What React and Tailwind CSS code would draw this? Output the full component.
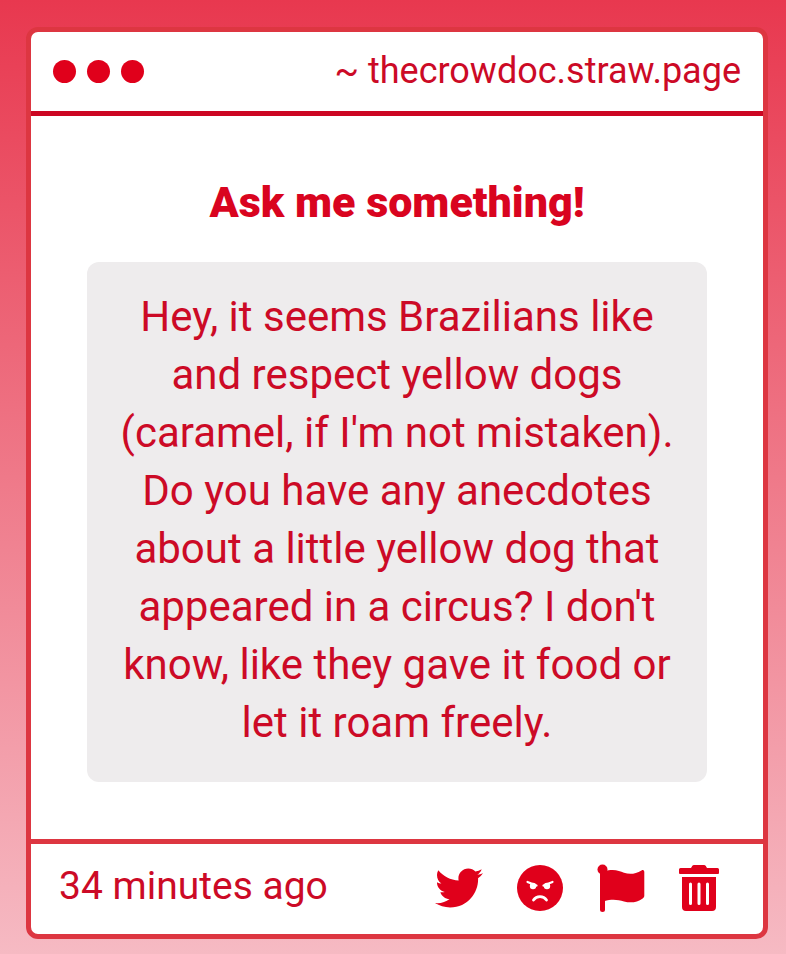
import { FaTwitter } from "react-icons/fa";

function AngryIcon() {
  return (
    <svg width="46" height="46" viewBox="0 0 46 46" aria-hidden="true">
      <circle cx="23" cy="23" r="23" fill="currentColor" />
      <g fill="white">
        <circle cx="16" cy="21" r="3.200" />
        <circle cx="30" cy="21" r="3.200" />
      </g>
      <g fill="none" stroke="white" strokeLinecap="round">
        <path d="M10.500 17l9 3.500M35.500 17l-9 3.500" strokeWidth="2.200" />
        <path d="M16.500 35c3-4.500 10-4.500 13 0" strokeWidth="2.800" />
      </g>
    </svg>
  );
}

function FlagIcon() {
  return (
    <svg width="48" height="48" viewBox="0 0 48 48" fill="currentColor" aria-hidden="true">
      <circle cx="5.500" cy="5.500" r="5" />
      <path d="M3 5.500h5v40a2.500 2.500 0 0 1-5 0z" />
      <path d="M7 7.500C17 4.500 22 7 27 8.800c6 2 11.500 1.200 17.500-2.400 1.500-.9 2.800-.2 2.800 1.600v23.500c0 1.300-.5 2.200-1.600 2.900-5.400 3.600-11.200 5-18.700 3-6.500-1.900-12-2.700-20-.2z" />
    </svg>
  );
}

function TrashIcon() {
  return (
    <svg width="40" height="46" viewBox="0 0 40 46" fill="currentColor" aria-hidden="true">
      <path d="M1.500 3H12l1.200-2c.4-.7 1-1 1.800-1h10c.8 0 1.400.3 1.800 1L28 3h10.500A1.500 1.500 0 0 1 40 4.500V8a1 1 0 0 1-1 1H1a1 1 0 0 1-1-1V4.500A1.500 1.500 0 0 1 1.500 3z" />
      <path
        fillRule="evenodd"
        d="M3 12h34v30a4 4 0 0 1-4 4H7a4 4 0 0 1-4-4zM10 19v19.500a1.500 1.500 0 0 0 3 0V19a1.500 1.500 0 0 0-3 0zM18.500 19v19.500a1.500 1.500 0 0 0 3 0V19a1.500 1.500 0 0 0-3 0zM27 19v19.500a1.500 1.500 0 0 0 3 0V19a1.500 1.500 0 0 0-3 0z"
      />
    </svg>
  );
}

export default function App() {
  return (
    <main className="min-h-screen bg-linear-to-b/srgb from-[#e8384f] to-[#f6bac3] pt-[27px] pr-[18px] pb-[15px] pl-[26px] font-['Roboto',sans-serif] text-[#cc0a26]">
      <article className="overflow-hidden rounded-[12px] border-[5px] border-[#dd3641] bg-white">
        <header className="flex h-[84px] items-center justify-between border-b-[5px] border-[#cc0622] px-[22px]">
          <div className="flex gap-[11px]">
            <span className="size-[23px] rounded-full bg-[#e0001b]" />
            <span className="size-[23px] rounded-full bg-[#e0001b]" />
            <span className="size-[23px] rounded-full bg-[#e0001b]" />
          </div>
          <a href="#page" className="pb-[2px] text-[36px] leading-[48px]">~ thecrowdoc.straw.page</a>
        </header>
        <section className="px-14 pt-[60px] pb-[57px] text-center">
          <h1 className="text-[43px] leading-[52px] font-black text-[#d9041f]">Ask me something!</h1>
          <p className="mt-[34px] rounded-[12px] bg-[#eeeced] px-7 pt-[26px] pb-[30px] text-[42px] leading-[58px]">
            Hey, it seems Brazilians like and respect yellow dogs (caramel, if I'm not mistaken). Do you have any anecdotes about a little yellow dog that appeared in a circus? I don't know, like they gave it food or let it roam freely.
          </p>
        </section>
        <footer className="flex h-[95px] items-center justify-between border-t-[5px] border-[#dd3641] pr-11 pl-7">
          <time className="pb-[6px] text-[39px] leading-[48px]">34 minutes ago</time>
          <div className="flex items-center gap-[34px] pb-[2px] text-[#e0001b]">
            <button aria-label="Share on Twitter"><FaTwitter size={48} /></button>
            <button aria-label="Block sender"><AngryIcon /></button>
            <button aria-label="Report"><FlagIcon /></button>
            <button aria-label="Delete"><TrashIcon /></button>
          </div>
        </footer>
      </article>
    </main>
  );
}
